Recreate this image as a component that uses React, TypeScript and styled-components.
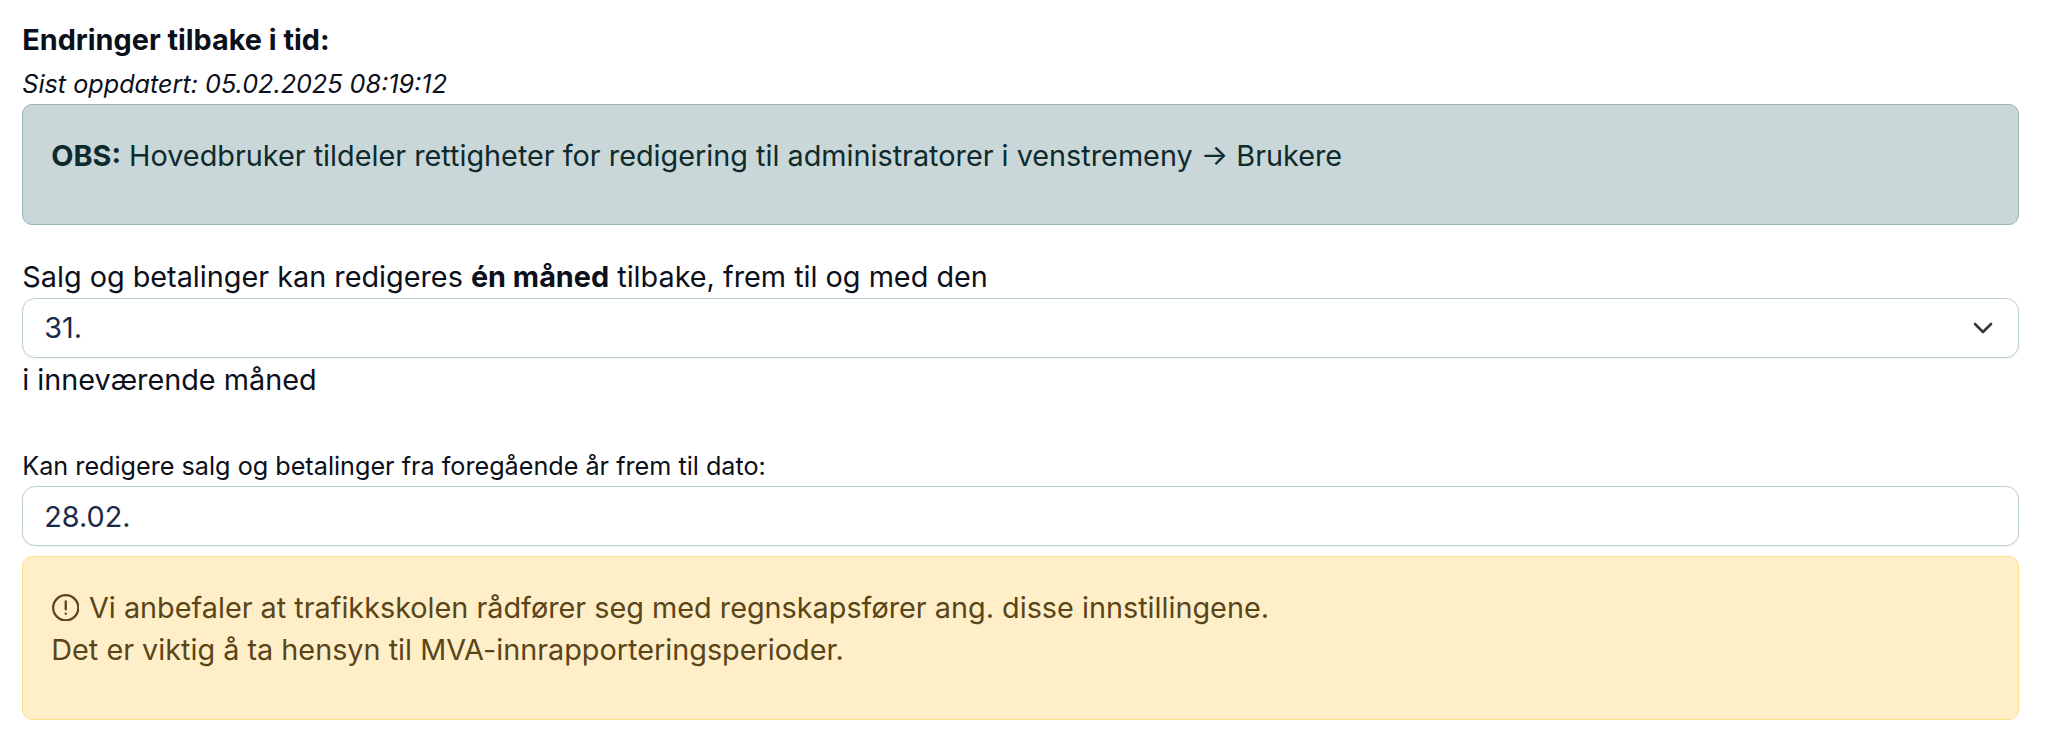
import styled, { createGlobalStyle } from "styled-components";

const GlobalStyle = createGlobalStyle`
  html, body {
    margin: 0;
    padding: 0;
    background: #ffffff;
  }
  body {
    font-family: "Inter", "Liberation Sans", sans-serif;
    color: #0a0f1a;
  }
`;

const Page = styled.div`
  padding: 18px 27.3px 0 22.3px;
  display: flex;
  flex-direction: column;
`;

const Heading = styled.h2`
  margin: 0;
  font-size: 28.8px;
  line-height: 43px;
  font-weight: 700;
  color: #0b101a;
`;

const Updated = styled.div`
  margin-top: 3px;
  font-size: 25.2px;
  line-height: 40px;
  font-style: italic;
  color: #0b101a;
`;

const Alert = styled.div<{ $tone: "info" | "warning" }>`
  box-sizing: border-box;
  border: 1.67px solid ${(p) => (p.$tone === "info" ? "#9ab5b6" : "#fde08a")};
  background: ${(p) => (p.$tone === "info" ? "#c9d7d8" : "#feefc8")};
  color: ${(p) => (p.$tone === "info" ? "#0e2a2d" : "#5a4518")};
  border-radius: 10px;
  padding: 30px 28px 28px;
  font-size: 28.8px;
  line-height: 42px;
`;

const InfoAlert = styled(Alert)`
  height: 120.5px;
`;

const WarningAlert = styled(Alert)`
  margin-top: 9.8px;
  height: 164px;
`;

const Text = styled.div`
  font-size: 28.8px;
  line-height: 43px;
  color: #0b101a;
`;

const Intro = styled(Text)`
  margin-top: 30px;
`;

const Label = styled.label`
  display: block;
  margin-top: 45.5px;
  font-size: 25.2px;
  line-height: 40px;
  color: #0b101a;
`;

const Field = styled.div`
  box-sizing: border-box;
  height: 60px;
  display: flex;
  align-items: center;
  justify-content: space-between;
  padding: 0 18.3px 0 21px;
  background: #ffffff;
  border: 1.67px solid #bccfd2;
  border-radius: 13px;
  box-shadow: 0 1px 2px rgba(0, 0, 0, 0.05);
  font-size: 28.8px;
  font-weight: 400;
  color: #1c2a4a;
`;

const Chevron = styled.svg`
  width: 32px;
  height: 32px;
  color: #333a44;
`;

const AlertIcon = styled.svg`
  width: 27.5px;
  height: 27.5px;
  vertical-align: -3.5px;
  margin-left: 0.5px;
  margin-right: 9.7px;
`;

const App = () => (
  <>
    <GlobalStyle />
    <Page>
      <Heading>Endringer tilbake i tid:</Heading>
      <Updated>Sist oppdatert: 05.02.2025 08:19:12</Updated>
      <InfoAlert $tone="info">
        <b>OBS:</b> Hovedbruker tildeler rettigheter for redigering til administratorer i venstremeny → Brukere
      </InfoAlert>
      <Intro>
        Salg og betalinger kan redigeres <b>én måned</b> tilbake, frem til og med den
      </Intro>
      <Field>
        31.
        <Chevron viewBox="0 0 24 24" fill="none" stroke="currentColor" strokeWidth="2" strokeLinecap="round" strokeLinejoin="round">
          <path d="M6 9l6 6 6-6" />
        </Chevron>
      </Field>
      <Text>i inneværende måned</Text>
      <Label>Kan redigere salg og betalinger fra foregående år frem til dato:</Label>
      <Field>28.02.</Field>
      <WarningAlert $tone="warning">
        <AlertIcon viewBox="0 0 24 24" fill="none" stroke="currentColor" strokeWidth="2" strokeLinecap="round">
          <circle cx="12" cy="12" r="11" />
          <path d="M12 6.5v7" />
          <path d="M12 17.2v.1" />
        </AlertIcon>
        Vi anbefaler at trafikkskolen rådfører seg med regnskapsfører ang. disse innstillingene.
        <br />
        Det er viktig å ta hensyn til MVA-innrapporteringsperioder.
      </WarningAlert>
    </Page>
  </>
);

export default App;
